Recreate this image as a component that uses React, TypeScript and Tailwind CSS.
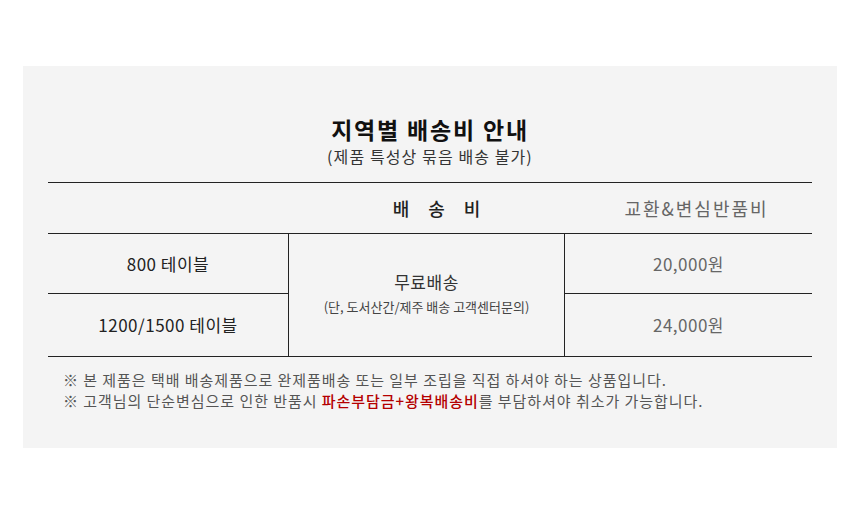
export default function App() {
  return (
    <div className="w-[860px] h-[506px] bg-white pt-[66px] pl-[23px] font-['Noto_Sans_CJK_KR',sans-serif]">
      <div className="w-[814px] h-[382px] bg-[#f4f4f4] px-[25px] pt-[49px]">
        {/* Title */}
        <div className="text-center">
          <h1 className="text-[23px] leading-[28px] font-bold text-[#111] tracking-[1.8px]">지역별 배송비 안내</h1>
          <p className="text-[16px] leading-[26px] text-[#333] tracking-[1.1px]">(제품 특성상 묶음 배송 불가)</p>
        </div>

        {/* Table */}
        <div className="mt-[13px] border-t border-b border-[#222]">
          <div className="grid grid-cols-[240px_277px_247px] h-[51px] border-b border-[#222] items-center">
            <div />
            <div className="flex justify-center gap-[19px] pl-[20px] text-[18px] font-medium text-[#222]">
              <span>배</span>
              <span>송</span>
              <span>비</span>
            </div>
            <div className="text-[18px] text-[#666] text-center pl-[16px] tracking-[2px]">교환&amp;변심반품비</div>
          </div>
          <div className="grid grid-cols-[240px_277px_247px] grid-rows-[60px_62px]">
            <div className="flex items-center justify-center border-b border-[#222] text-[17px] text-[#222] tracking-[0.5px]">800 테이블</div>
            <div className="row-span-2 flex flex-col items-center justify-center border-l border-r border-[#222] pb-[4px]">
              <p className="text-[17px] leading-[24px] text-[#333] tracking-[0.5px]">무료배송</p>
              <p className="mt-[4px] text-[13px] leading-[18px] text-[#444]">(단, 도서산간/제주 배송 고객센터문의)</p>
            </div>
            <div className="flex items-center justify-center border-b border-[#222] text-[17px] text-[#666] tracking-[0.5px]">20,000원</div>
            <div className="flex items-center justify-center text-[17px] text-[#222] tracking-[0.5px]">1200/1500 테이블</div>
            <div className="flex items-center justify-center text-[17px] text-[#666] tracking-[0.5px]">24,000원</div>
          </div>
        </div>

        {/* Notes */}
        <div className="mt-[12px] pl-[15px] text-[15px] leading-[21px] text-[#555] tracking-[0.95px]">
          <p>※ 본 제품은 택배 배송제품으로 완제품배송 또는 일부 조립을 직접 하셔야 하는 상품입니다.</p>
          <p>
            ※ 고객님의 단순변심으로 인한 반품시{' '}
            <span className="text-[#b40000] font-medium">파손부담금+왕복배송비</span>를 부담하셔야 취소가 가능합니다.
          </p>
        </div>
      </div>
    </div>
  );
}
